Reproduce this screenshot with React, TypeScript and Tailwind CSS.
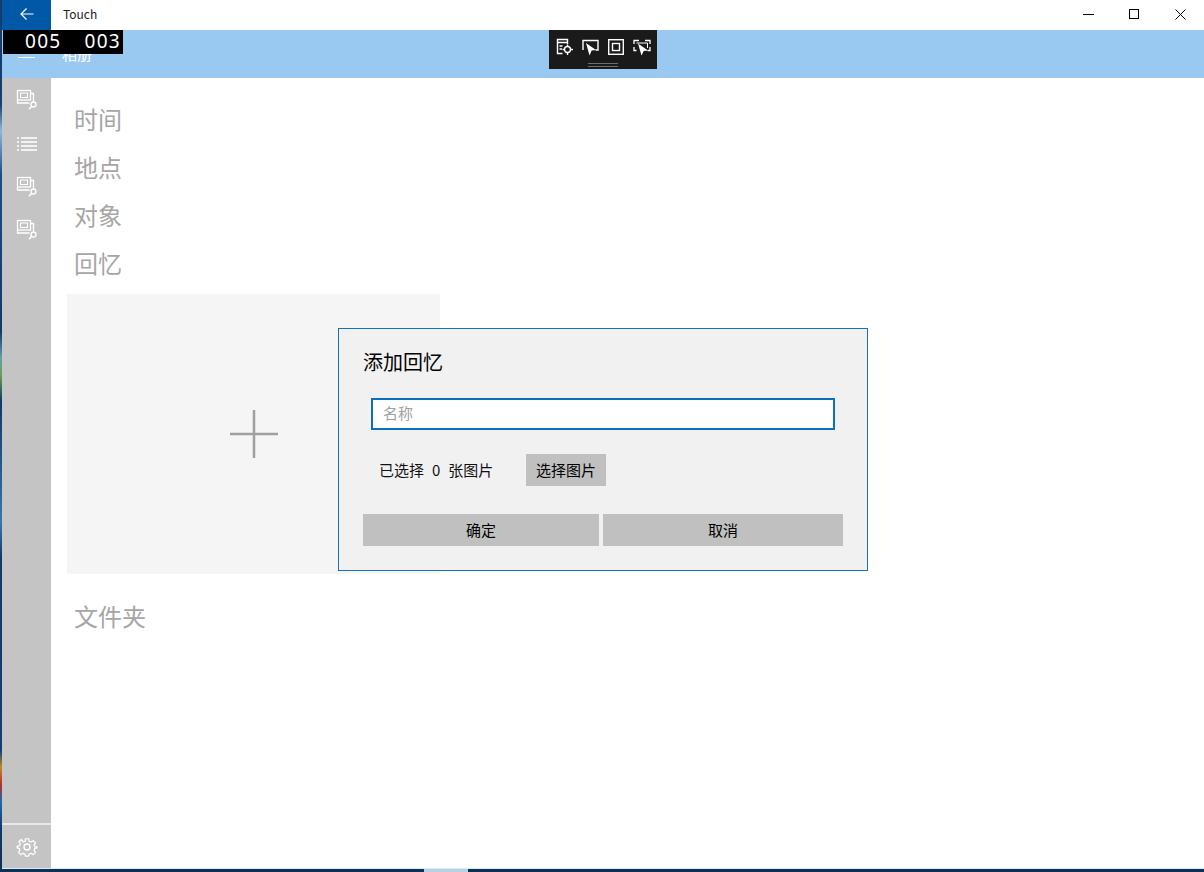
import React from "react";

const cjk = "font-['Microsoft_YaHei','Noto_Sans_CJK_SC','Noto_Sans',sans-serif]";

function MonitorSearch() {
  return (
    <svg width="22" height="22" viewBox="0 0 22 22" fill="none" stroke="#ffffff" strokeWidth="1.300">
      <rect x="1.500" y="1.500" width="13" height="9.500" />
      <rect x="4.500" y="4" width="7" height="4.500" strokeWidth="1" />
      <path d="M1.500 11v3h12" />
      <path d="M14.500 4.500h3v8" />
      <circle cx="17.500" cy="15.500" r="2.500" />
      <path d="M15.700 17.300l-2.700 2.900" strokeWidth="1.600" />
    </svg>
  );
}

function ListIcon() {
  return (
    <svg width="22" height="16" viewBox="0 0 22 16" stroke="#ffffff" strokeWidth="1.300" fill="none">
      <path d="M1 2h2M1 6h2M1 10h2M1 14h2" />
      <path d="M5 2h16M5 6h16M5 10h16M5 14h16" />
    </svg>
  );
}

function Gear() {
  return (
    <svg width="22" height="22" viewBox="0 0 24 24" fill="none" stroke="#ffffff" strokeWidth="1.500" strokeLinejoin="round">
      <path d="M10 2h4l.6 3 2.300 1 2.600-1.700 2.800 2.800L20.600 9.700l1 2.300 2.400.6v-1.200V13l-2.400.6-1 2.300 1.700 2.600-2.800 2.800-2.600-1.700-2.300 1-.6 2.400h-4l-.6-2.400-2.300-1-2.600 1.700-2.800-2.800 1.700-2.600-1-2.300L0 13v-2l3-.6 1-2.300-1.700-2.400 2.800-2.800L7.700 6l2.300-1z" transform="translate(1.200 1.200) scale(0.9)" />
      <circle cx="12" cy="12" r="3.300" />
    </svg>
  );
}

function Toolbar() {
  return (
    <div className="absolute left-[549px] top-[30px] flex h-[39px] w-[108px] flex-col items-center bg-[#1a1a1a]">
      <div className="mt-[8px] flex items-center gap-[9px]">
        <svg width="17" height="18" viewBox="0 0 17 18" fill="none" stroke="#fff" strokeWidth="1.400">
          <path d="M6.500 15.500H1.500V1.500h10v4.500" />
          <path d="M1.500 4.500h10M3.500 8h3M3.500 11h2.500" />
          <circle cx="11.500" cy="11.500" r="3" />
          <path d="M11.500 6.500v2M11.500 14.500v2.500M6.500 11.500h2M14.500 11.500h2.500" />
        </svg>
        <svg width="17" height="17" viewBox="0 0 17 17" fill="none">
          <path d="M1 11V1.500h15V11h-2.500" stroke="#fff" strokeWidth="1.400" />
          <path d="M4 4l10 7-4.300.6L7.500 16.500z" fill="#fff" />
        </svg>
        <svg width="16" height="16" viewBox="0 0 16 16" fill="none" stroke="#fff" strokeWidth="1.400">
          <rect x="0.700" y="0.700" width="14.600" height="14.600" />
          <rect x="4.500" y="4.500" width="7" height="7" />
        </svg>
        <svg width="18" height="17" viewBox="0 0 18 17" fill="none">
          <path d="M1 5V1.500h5M12 1.500h5V5M17 8v3.500h-2.500M1 8v3.500h2.500" stroke="#fff" strokeWidth="1.300" />
          <path d="M3.500 4h11v5" stroke="#fff" strokeWidth="1" />
          <path d="M5 4.500l10 7-4.300.6-2.200 4.400z" fill="#fff" />
        </svg>
      </div>
      <div className="mt-[7px] h-[4px] w-[30px] border-y border-[#6e6e6e]" />
    </div>
  );
}

function Heading({ children, className = "" }: { children: React.ReactNode; className?: string }) {
  return (
    <div className={`flex h-[48px] items-center pl-[23px] text-[24px] font-normal leading-none text-[#a6a6a6] ${className}`}>
      {children}
    </div>
  );
}

function GrayButton({ className, children }: { className: string; children: React.ReactNode }) {
  return (
    <div className={`flex h-[32px] items-center justify-center bg-[#c0c0c0] pb-[2px] text-[15px] leading-none text-black ${className}`}>
      {children}
    </div>
  );
}

export default function App() {
  return (
    <div className={`relative h-[872px] w-[1204px] overflow-hidden bg-[linear-gradient(180deg,#123d6c_0%,#16406e_12%,#8fb8dc_15%,#1a4f84_20%,#0f3a66_38%,#5f9fb0_41%,#6aa050_43%,#0f3a66_46%,#3a76a8_60%,#0f3a66_64%,#123f70_86%,#c08a20_88%,#b03030_90%,#1a6ab0_92%,#0f3a66_95%,#0f2f55_100%)] pb-[3px] pl-[2px] ${cjk}`}>
      <div className="flex h-full flex-col border-b border-[#d5eefa] bg-white">
        {/* title bar */}
        <div className="flex h-[30px] items-center">
          <div className="flex h-full w-[49px] items-center justify-center bg-[#0058a6] pb-[2px]">
            <svg width="14" height="14" viewBox="0 0 14 14" fill="none" stroke="#fff" strokeWidth="1.200">
              <path d="M13.500 7H1M6.500 1.500L1 7l5.500 5.500" />
            </svg>
          </div>
          <div className="mb-[3px] ml-[12px] text-[12px] leading-none text-[#222222]">Touch</div>
          <div className="ml-auto flex h-full items-center pb-[2px] pr-[1px]">
            <div className="flex h-full w-[46px] items-center justify-center">
              <div className="h-px w-[11px] bg-black" />
            </div>
            <div className="flex h-full w-[46px] items-center justify-center">
              <div className="h-[10px] w-[10px] border border-black" />
            </div>
            <div className="flex h-full w-[46px] items-center justify-center">
              <svg width="11" height="11" viewBox="0 0 11 11" stroke="#000" strokeWidth="1">
                <path d="M0.500 0.500l10 10M10.500 0.500l-10 10" />
              </svg>
            </div>
          </div>
        </div>
        {/* header */}
        <div className="flex h-[48px] items-start bg-[#99c9f1]">
          <div className="mt-[19px] flex w-[49px] flex-col items-center gap-[3px]">
            <div className="h-px w-[17px] bg-white" />
            <div className="h-px w-[17px] bg-white" />
            <div className="h-px w-[17px] bg-white" />
          </div>
          <div className="ml-[11px] mt-[14px] text-[15px] leading-[20px] text-white">相册</div>
        </div>
        {/* body */}
        <div className="flex min-h-0 flex-1">
          <div className="flex w-[49px] flex-col items-center bg-[#c4c4c4]">
            <div className="flex h-[42px] w-full items-center justify-center pt-[2px]"><MonitorSearch /></div>
            <div className="flex h-[44px] w-full items-center justify-center pt-[4px]"><ListIcon /></div>
            <div className="flex h-[44px] w-full items-center justify-center pt-[2px]"><MonitorSearch /></div>
            <div className="flex h-[44px] w-full items-center justify-center pb-[1px]"><MonitorSearch /></div>
            <div className="mt-auto h-[2px] w-full bg-[#e8e8e8]" />
            <div className="flex h-[43px] w-full items-center justify-center"><Gear /></div>
          </div>
          <div className="flex-1 pt-[17px]">
            <Heading>时间</Heading>
            <Heading>地点</Heading>
            <Heading>对象</Heading>
            <Heading>回忆</Heading>
            <div className="ml-[16px] mt-[7px] flex h-[280px] w-[373px] items-center justify-center bg-[#f5f5f5]">
              <svg width="48" height="48" viewBox="0 0 48 48" stroke="#a0a0a0" strokeWidth="2.500">
                <path d="M24 0v48M0 24h48" />
              </svg>
            </div>
            <Heading className="mt-[18px]">文件夹</Heading>
          </div>
        </div>
      </div>

      {/* taskbar sliver */}
      <div className="absolute bottom-0 left-[424px] h-[3px] w-[44px] bg-[#b9cfe3]" />

      {/* counter overlay */}
      <div className="absolute left-[3px] top-[30px] flex h-[24px] w-[120px] items-center bg-black pb-[2px] pl-[22px] font-['Noto_Sans',sans-serif] text-[19px] leading-none tracking-[1.300px] text-white">
        <span>005</span>
        <span className="ml-[23px]">003</span>
      </div>

      <Toolbar />

      {/* dialog */}
      <div className="absolute left-[338px] top-[328px] h-[243px] w-[530px] border border-[#1473b8] bg-[#f1f1f1] pl-[24px]">
        <div className="mt-[20px] text-[20px] leading-[26px] text-black">添加回忆</div>
        <div className="ml-[8px] mt-[23px] flex h-[32px] w-[464px] items-center border-2 border-[#0a6fbd] bg-white pb-[4px] pl-[10px] text-[15px] leading-none text-[#a0a0a0]">
          名称
        </div>
        <div className="mt-[24px] flex h-[32px] items-center pl-[16px] text-[15px] leading-none text-[#111111]">
          <div className="flex w-[147px] items-center gap-[8px] pb-[2px]">
            <span>已选择</span>
            <span>0</span>
            <span>张图片</span>
          </div>
          <GrayButton className="w-[80px]">选择图片</GrayButton>
        </div>
        <div className="mt-[28px] flex gap-[4px]">
          <GrayButton className="w-[236px]">确定</GrayButton>
          <GrayButton className="w-[240px]">取消</GrayButton>
        </div>
      </div>
    </div>
  );
}
